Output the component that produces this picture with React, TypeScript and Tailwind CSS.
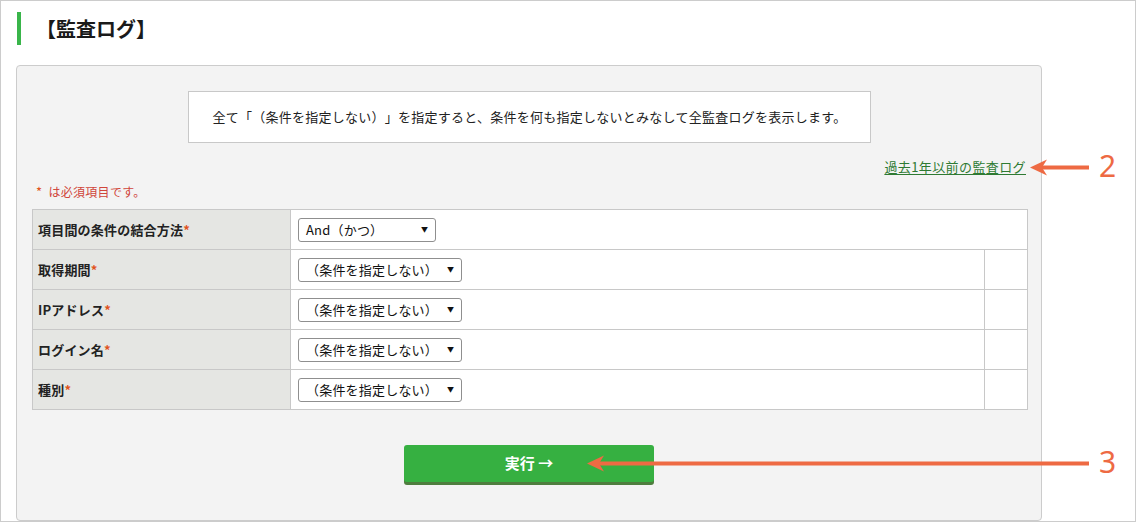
import React from 'react';

const rows = [
  { label: '取得期間' },
  { label: 'IPアドレス' },
  { label: 'ログイン名' },
  { label: '種別' },
];

// Fake select box (native selects render differently per platform)
const SelectBox: React.FC<{ text: string; width: string }> = ({ text, width }) => (
  <div
    className={`${width} h-[24px] border border-[#8f8f8f] rounded-[3px] bg-white flex items-center justify-between pl-[7px] pr-[7px] text-[13px] text-[#111]`}
  >
    <span className="tracking-[0.2px]">{text}</span>
    <span className="text-[7px] leading-none">▼</span>
  </div>
);

const Req = () => <span className="text-[#e0541e]">*</span>;

export default function App() {
  return (
    <div className="w-[1136px] h-[522px] border border-[#cccccc] bg-white relative overflow-hidden font-['Noto_Sans_CJK_JP','Noto_Sans',sans-serif] text-[#222] [text-spacing-trim:space-all]">
      {/* Page title */}
      <div className="mt-[11px] ml-[16px] h-[33px] border-l-4 border-[#39b54a] pl-[15px] flex items-center text-[20px] font-bold text-[#1a1a1a]">
        【監査ログ】
      </div>

      {/* Search panel */}
      <div className="mt-[20px] ml-[15px] w-[1026px] h-[456px] border border-[#cccccc] rounded-[4px] bg-[#f3f3f3] pl-[15px] pr-[13px]">
        <div className="mt-[25px] ml-[156px] w-[683px] h-[52px] border border-[#c8c8c8] bg-white flex items-center justify-center text-[13px] text-[#222] tracking-[0.25px]">
          全て「（条件を指定しない）」を指定すると、条件を何も指定しないとみなして全監査ログを表示します。
        </div>

        <div className="mt-[14px] h-[20px] flex items-center justify-end pr-[2px] text-[13px] tracking-[0.4px]">
          <a href="#" className="text-[#2e7a32] underline underline-offset-2">
            過去1年以前の監査ログ
          </a>
        </div>

        <div className="mt-[5px] h-[20px] flex items-center pl-[4px] text-[12px] tracking-[0.3px] text-[#d0453a]">
          <span className="text-[#e0541e] mr-[6px] text-[13px]">*</span>は必須項目です。
        </div>

        <table className="mt-[7px] w-[996px] border-collapse text-[13px]">
          <tbody>
            <tr className="h-[40px]">
              <th className="w-[258px] border border-[#c8c8c8] bg-[#e5e6e3] text-left font-bold pl-[5px] text-[#222] tracking-[0.2px]">
                項目間の条件の結合方法<Req />
              </th>
              <td colSpan={2} className="border border-[#c8c8c8] bg-white pl-[7px]">
                <SelectBox text="And（かつ）" width="w-[138px]" />
              </td>
            </tr>
            {rows.map((r) => (
              <tr key={r.label} className="h-[40px]">
                <th className="w-[258px] border border-[#c8c8c8] bg-[#e5e6e3] text-left font-bold pl-[5px] text-[#222] tracking-[0.2px]">
                  {r.label}
                  <Req />
                </th>
                <td className="border border-[#c8c8c8] bg-white pl-[7px]">
                  <SelectBox text="（条件を指定しない）" width="w-[164px]" />
                </td>
                <td className="w-[43px] border border-[#c8c8c8] bg-white"></td>
              </tr>
            ))}
          </tbody>
        </table>

        <div className="mt-[35px] flex justify-center pr-[2px]">
          <button className="w-[250px] h-[37px] rounded-[3px] bg-[#36b041] shadow-[0_3px_0_#4e7d3e] text-white font-bold text-[15px]">
            実行 →
          </button>
        </div>
      </div>

      {/* Annotation arrows */}
      <svg className="absolute left-0 top-0 pointer-events-none" width="1136" height="522">
        <line x1="1040" y1="166.5" x2="1088" y2="166.5" stroke="#ee6a43" strokeWidth="4" />
        <polygon points="1029,166.5 1046,158.5 1041,166.5 1046,174.5" fill="#ee6a43" />
        <line x1="598" y1="462.5" x2="1088" y2="462.5" stroke="#ee6a43" strokeWidth="4" />
        <polygon points="586,462.5 603,454.5 598,462.5 603,470.5" fill="#ee6a43" />
      </svg>
      <span className="absolute left-[1098px] top-[145px] text-[30px] leading-[40px] text-[#ee6a43] font-['Noto_Sans',sans-serif]">
        2
      </span>
      <span className="absolute left-[1098px] top-[441px] text-[30px] leading-[40px] text-[#ee6a43] font-['Noto_Sans',sans-serif]">
        3
      </span>
    </div>
  );
}
